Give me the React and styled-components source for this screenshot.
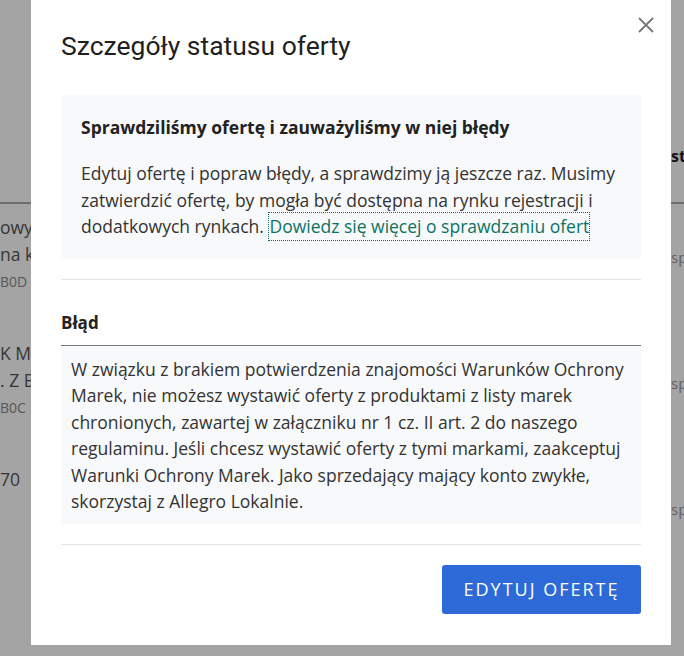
import React from 'react'
import styled, { createGlobalStyle } from 'styled-components'

const Global = createGlobalStyle`
  html, body {
    margin: 0;
    padding: 0;
    width: 684px;
    height: 656px;
    overflow: hidden;
    background: #fff;
    font-family: "Open Sans", "Liberation Sans", sans-serif;
  }
`

const Page = styled.div`
  position: relative;
  width: 684px;
  height: 656px;
  overflow: hidden;
  background: #fff;
`

const Table = styled.div`
  display: grid;
  grid-template-columns: 671px 13px;
  padding-top: 142px;
`

const HeadCell = styled.div`
  height: 62px;
  box-sizing: border-box;
  border-bottom: 2px solid #aaa;
  font-size: 16px;
  font-weight: 700;
  color: #222;
  padding: 2px 0 0 ${(p) => p.$pad || 0}px;
  line-height: 24px;
  white-space: nowrap;
`

const Cell = styled.div`
  height: 126px;
  padding: 10px 0 0 ${(p) => p.$pad || 0}px;
  box-sizing: border-box;
  color: #555;
  font-size: 17.5px;
  line-height: 26.5px;
  white-space: nowrap;
`

const Small = styled.div`
  font-size: 14px;
  color: #888;
  line-height: 30px;
`

const Faint = styled.div`
  font-size: 15px;
  color: #999;
  line-height: 26px;
  padding-top: 30px;
`

const Backdrop = styled.div`
  position: absolute;
  inset: 0;
  background: rgba(0, 0, 0, 0.355);
`

const Modal = styled.div`
  position: absolute;
  left: 31px;
  top: 0;
  width: 640px;
  height: 645px;
  box-sizing: border-box;
  background: #fff;
  padding: 30px 30px 31px;
  display: flex;
  flex-direction: column;
`

const Close = styled.button`
  position: absolute;
  top: 13px;
  right: 13px;
  width: 24px;
  height: 24px;
  border: 0;
  padding: 0;
  background: none;
  display: flex;
  align-items: center;
  justify-content: center;
`

const Title = styled.h2`
  margin: 0;
  font-family: Roboto, "Liberation Sans", sans-serif;
  font-weight: 400;
  font-size: 26.5px;
  line-height: 32px;
  color: #1f1f1f;
`

const InfoBox = styled.div`
  margin-top: 33px;
  background: #f8f9fa;
  padding: 20px 20px 19px;
`

const InfoHeading = styled.div`
  font-size: 17.5px;
  font-weight: 700;
  line-height: 24px;
  color: #222;
  margin-bottom: 21px;
`

const Text = styled.p`
  margin: 0;
  font-size: 17.5px;
  line-height: 26.5px;
  color: #333;
`

const Link = styled.a`
  color: #0b7364;
  text-decoration: none;
  border: 1px dotted #0b7364;
  padding: 1px 0 2px;
`

const Divider = styled.hr`
  margin: 20px 0 0;
  border: 0;
  border-top: 1px solid #e4e4e4;
`

const ErrorHeading = styled.div`
  margin-top: 31px;
  font-size: 17px;
  font-weight: 700;
  line-height: 24px;
  color: #222;
  padding-bottom: 10px;
  border-bottom: 1px solid #777;
`

const ErrorBox = styled.div`
  background: #f8f9fa;
  padding: 10px 10px 9px;
`

const Footer = styled.div`
  margin-top: 20px;
  display: flex;
  justify-content: flex-end;
`

const Button = styled.button`
  width: 199px;
  height: 49px;
  border: 0;
  border-radius: 3px;
  background: #2d6ad8;
  color: #fff;
  font-family: "Open Sans", "Liberation Sans", sans-serif;
  font-size: 18px;
  letter-spacing: 2px;
  text-transform: uppercase;
`

export default function App() {
  return (
    <Page>
      <Global />
      <Table>
        <HeadCell />
        <HeadCell>status</HeadCell>
        <Cell>
          owy asortyment
          <br />
          na kolor
          <Small>B0D</Small>
        </Cell>
        <Cell>
          <Faint>sprzedaż</Faint>
        </Cell>
        <Cell>
          K MĘSKI
          <br />. Z BAWEŁNY
          <Small>B0C</Small>
        </Cell>
        <Cell>
          <Faint>sprzedaż</Faint>
        </Cell>
        <Cell>70</Cell>
        <Cell>
          <Faint>sprzedaż</Faint>
        </Cell>
      </Table>
      <Backdrop />
      <Modal>
        <Close aria-label="Zamknij">
          <svg width="16" height="16" viewBox="0 0 16 16">
            <path d="M1 1L15 15M15 1L1 15" stroke="#777" strokeWidth="1.8" fill="none" />
          </svg>
        </Close>
        <Title>Szczegóły statusu oferty</Title>
        <InfoBox>
          <InfoHeading>Sprawdziliśmy ofertę i zauważyliśmy w niej błędy</InfoHeading>
          <Text>
            Edytuj ofertę i popraw błędy, a sprawdzimy ją jeszcze raz. Musimy zatwierdzić ofertę, by
            mogła być dostępna na rynku rejestracji i dodatkowych rynkach.{' '}
            <Link href="#">Dowiedz się więcej o sprawdzaniu ofert</Link>
          </Text>
        </InfoBox>
        <Divider />
        <ErrorHeading>Błąd</ErrorHeading>
        <ErrorBox>
          <Text>
            W związku z brakiem potwierdzenia znajomości Warunków Ochrony Marek, nie możesz wystawić
            oferty z produktami z listy marek chronionych, zawartej w załączniku nr 1 cz. II art. 2
            do naszego regulaminu. Jeśli chcesz wystawić oferty z tymi markami, zaakceptuj Warunki
            Ochrony Marek. Jako sprzedający mający konto zwykłe, skorzystaj z Allegro Lokalnie.
          </Text>
        </ErrorBox>
        <Divider />
        <Footer>
          <Button>Edytuj ofertę</Button>
        </Footer>
      </Modal>
    </Page>
  )
}
